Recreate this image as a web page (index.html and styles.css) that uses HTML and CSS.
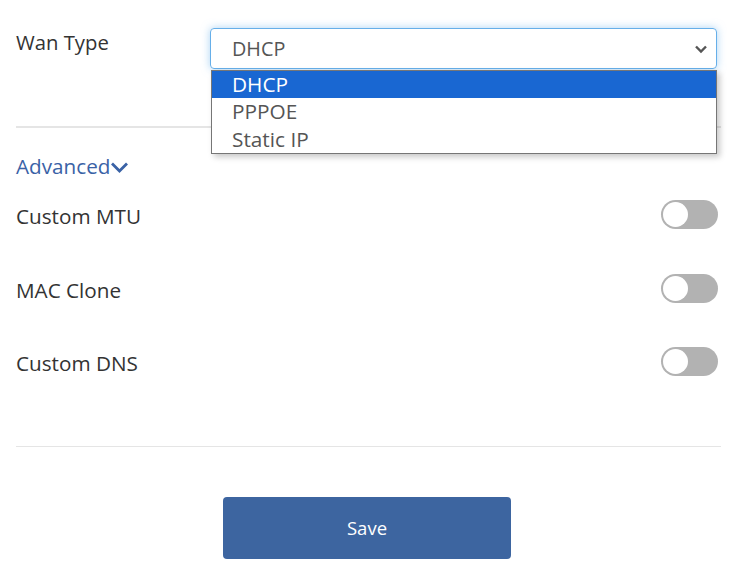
FILE: index.html
```html
<!DOCTYPE html>
<html>
<head>
<meta charset="utf-8">
<link rel="stylesheet" href="styles.css">
</head>
<body>
<div class="page">
  <div class="wan-row">
    <div class="label">Wan Type</div>
    <div class="select-wrap">
      <div class="select">
        <span class="select-value">DHCP</span>
        <svg class="select-arrow" width="14" height="10" viewBox="0 0 14 10"><path d="M2 2.5 L7 7.5 L12 2.5" fill="none" stroke="#555" stroke-width="2.4"/></svg>
      </div>
      <ul class="dropdown">
        <li class="option selected">DHCP</li>
        <li class="option">PPPOE</li>
        <li class="option">Static IP</li>
      </ul>
    </div>
  </div>
  <hr class="divider thick">
  <div class="advanced">Advanced<svg class="adv-chevron" width="19" height="14" viewBox="0 0 19 14"><path d="M2 3.5 L9.5 11 L17 3.5" fill="none" stroke="#3a62a6" stroke-width="2.8"/></svg></div>
  <div class="toggle-list">
    <div class="toggle-row">
      <span class="row-label">Custom MTU</span>
      <span class="switch"><span class="knob"></span></span>
    </div>
    <div class="toggle-row">
      <span class="row-label">MAC Clone</span>
      <span class="switch"><span class="knob"></span></span>
    </div>
    <div class="toggle-row">
      <span class="row-label">Custom DNS</span>
      <span class="switch"><span class="knob"></span></span>
    </div>
  </div>
  <hr class="divider thin">
  <div class="actions">
    <button class="save">Save</button>
  </div>
</div>
</body>
</html>
```
FILE: styles.css
```css
html, body {
  margin: 0;
  padding: 0;
  background: #fff;
}
body {
  font-family: "Open Sans", "Noto Sans", sans-serif;
  color: #333;
}
.page {
  padding: 0 21px 0 16px;
}
.wan-row {
  display: flex;
  padding-top: 28px;
}
.label {
  width: 194px;
  font-size: 20.3px;
  line-height: 28px;
  color: #333;
}
.select-wrap {
  position: relative;
  flex: 1;
  margin-right: 4px;
}
.select {
  height: 41px;
  box-sizing: border-box;
  border: 1px solid #66afe9;
  border-radius: 4px;
  box-shadow: 0 0 8px rgba(102, 175, 233, 0.55);
  display: flex;
  align-items: center;
  justify-content: space-between;
  padding: 0 8px 0 21px;
  color: #555;
  font-size: 19.8px;
}
.select-arrow {
  display: block;
}
.dropdown {
  position: absolute;
  top: 42px;
  left: 1px;
  right: 0;
  margin: 0;
  padding: 0;
  list-style: none;
  background: #fff;
  border: 1px solid #767676;
  box-shadow: 3px 3px 6px rgba(0, 0, 0, 0.22);
  z-index: 5;
}
.option {
  height: 27.3px;
  line-height: 27px;
  padding-left: 20px;
  font-size: 20.8px;
  color: #555;
}
.option.selected {
  background: #1967d2;
  color: #fff;
}
.divider {
  border: 0;
  margin: 0;
  background: #e5e5e5;
}
.divider.thick {
  height: 2px;
  margin-top: 57px;
}
.divider.thin {
  height: 1px;
  margin-top: 31px;
}
.advanced {
  margin-top: 25px;
  font-size: 20.7px;
  line-height: 26px;
  color: #3a62a6;
  display: flex;
  align-items: center;
}
.adv-chevron {
  display: block;
  margin-left: 0;
  margin-top: 1px;
}
.toggle-list {
  padding-top: 15px;
}
.toggle-row {
  height: 73.5px;
  display: flex;
  justify-content: space-between;
  align-items: flex-start;
  padding-top: 6px;
  box-sizing: border-box;
}
.row-label {
  font-size: 20.7px;
  line-height: 28px;
  padding-top: 2px;
  color: #333;
}
.switch {
  width: 57px;
  height: 29px;
  margin-right: 3px;
  border-radius: 15px;
  background: #b2b2b2;
  display: flex;
  align-items: center;
  padding-left: 2px;
  box-sizing: border-box;
}
.knob {
  width: 25px;
  height: 25px;
  border-radius: 50%;
  background: #fff;
}
.actions {
  display: flex;
  justify-content: center;
  padding-top: 50px;
  padding-right: 3px;
}
.save {
  width: 288px;
  height: 62px;
  border: 0;
  border-radius: 4px;
  background: #3d65a0;
  color: #fff;
  font-family: "Open Sans", "Noto Sans", sans-serif;
  font-size: 18.5px;
}
```
